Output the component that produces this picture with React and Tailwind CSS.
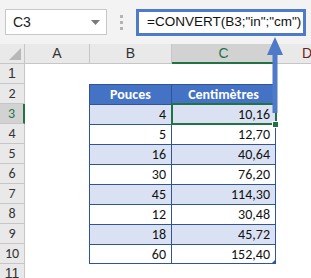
import React from "react";

const rows = [
  { n: 3, a: "4", b: "10,16" },
  { n: 4, a: "5", b: "12,70" },
  { n: 5, a: "16", b: "40,64" },
  { n: 6, a: "30", b: "76,20" },
  { n: 7, a: "45", b: "114,30" },
  { n: 8, a: "12", b: "30,48" },
  { n: 9, a: "18", b: "45,72" },
  { n: 10, a: "60", b: "152,40" },
];

const font = { fontFamily: "Calibri, Carlito, 'Liberation Sans', sans-serif" };

// row header cell on the left side of the sheet
const RowHead = ({ n, active }) => (
  <div
    className={
      "w-[25px] shrink-0 h-full flex items-center justify-center text-[14px] border-b border-r border-[#c6c6c6] " +
      (active ? "bg-[#d2d2d2] text-[#217346] border-r-2 border-r-[#217346]" : "bg-[#e9e9e9] text-[#333]")
    }
  >
    {n}
  </div>
);

const App = () => {
  return (
    <div
      className="relative w-[311px] h-[278px] overflow-hidden bg-white font-['Liberation_Sans',sans-serif]"
    >
      {/* formula bar */}
      <div className="h-[44px] bg-[#f3f3f3] flex items-start pt-[9px]">
        <div className="ml-[5px] w-[102px] h-[26px] bg-white border border-[#c8c8c8] flex items-center pl-[7px] pr-[6px] text-[14px] text-[#222]">
          <span className="flex-1">C3</span>
          <svg width="9" height="5" viewBox="0 0 9 5">
            <path d="M0 0 H9 L4.5 5 Z" fill="#7a7a7a" />
          </svg>
        </div>
        <div className="w-[29px] h-[26px] flex flex-col items-center justify-center gap-[3px]">
          <div className="w-[3px] h-[3px] bg-[#b4b4b4]" />
          <div className="w-[3px] h-[3px] bg-[#b4b4b4]" />
          <div className="w-[3px] h-[3px] bg-[#b4b4b4]" />
        </div>
        <div className="w-[170px] h-[27px] bg-white border-[3px] border-[#4f7ac7] flex items-center pl-[8px] text-[13.5px] text-[#111] whitespace-nowrap">
          =CONVERT(B3;"in";"cm")
        </div>
      </div>

      {/* column headers */}
      <div className="h-[20px] flex text-[14px] text-[#333]">
        <div className="w-[25px] shrink-0 bg-[#e9e9e9] border-b border-r border-[#c6c6c6] flex items-end justify-end p-[3px]">
          <svg width="12" height="12" viewBox="0 0 12 12">
            <path d="M12 0 V12 H0 Z" fill="#b8b8b8" />
          </svg>
        </div>
        <div className="w-[65px] shrink-0 bg-[#e9e9e9] border-b border-r border-[#c6c6c6] flex items-center justify-center">A</div>
        <div className="w-[82px] shrink-0 bg-[#e9e9e9] border-b border-r border-[#c6c6c6] flex items-center justify-center">B</div>
        <div className="w-[104px] shrink-0 bg-[#d2d2d2] border-b-2 border-b-[#217346] border-r border-[#c6c6c6] flex items-center justify-center text-[#217346]">C</div>
        <div className="flex-1 bg-[#e9e9e9] border-b border-[#c6c6c6] flex items-center pl-[26px] text-[#6b1d1d]">D</div>
      </div>

      {/* row 1 */}
      <div className="h-[20px] flex">
        <RowHead n={1} />
      </div>

      {/* row 2: table header */}
      <div className="h-[20px] flex" style={font}>
        <RowHead n={2} />
        <div className="w-[64px] shrink-0" />
        <div className="w-[83px] shrink-0 bg-[#4472c4] border-l border-t border-r border-[#2f5597] flex items-center justify-center text-white font-bold text-[14px]">
          Pouces
        </div>
        <div className="w-[104px] shrink-0 bg-[#4472c4] border-t border-r border-[#2f5597] flex items-center justify-center text-white font-bold text-[14px]">
          Centimètres
        </div>
      </div>

      {/* table body */}
      {rows.map((r, i) => (
        <div key={r.n} className="h-[20px] flex text-[14px] text-[#111]" style={font}>
          <RowHead n={r.n} active={r.n === 3} />
          <div className="w-[64px] shrink-0" />
          <div
            className={
              "w-[83px] shrink-0 border-l border-t border-r border-[#2f5597] flex items-center justify-end pr-[5px] " +
              (i % 2 === 0 ? "bg-[#d9e1f2]" : "bg-white") +
              (i === rows.length - 1 ? " border-b" : "")
            }
          >
            {r.a}
          </div>
          <div
            className={
              "w-[104px] shrink-0 border-t border-r border-[#2f5597] flex items-center justify-end pr-[5px] " +
              (i % 2 === 0 ? "bg-[#d9e1f2]" : "bg-white") +
              (i === rows.length - 1 ? " border-b" : "")
            }
          >
            {r.b}
          </div>
        </div>
      ))}

      {/* row 11 */}
      <div className="h-[20px] flex">
        <RowHead n={11} />
      </div>

      {/* active cell C3 */}
      <div className="absolute left-[171px] top-[103px] w-[106px] h-[22px] border-2 border-[#217346]" />
      <div className="absolute left-[272px] top-[121px] w-[7px] h-[7px] bg-[#217346] border border-white" />

      {/* table resize corner */}
      <svg className="absolute left-[271px] top-[259px]" width="5" height="5" viewBox="0 0 5 5">
        <path d="M5 0 V5 H0 Z" fill="#2f5597" />
      </svg>

      {/* arrow from C3 up to formula */}
      <svg className="absolute left-[266px] top-[36px]" width="18" height="78" viewBox="0 0 18 78">
        <path d="M9 1 L17 19 H11.5 V77 H6.5 V19 H1 Z" fill="#4f7ac7" />
      </svg>
    </div>
  );
};

export default App;
